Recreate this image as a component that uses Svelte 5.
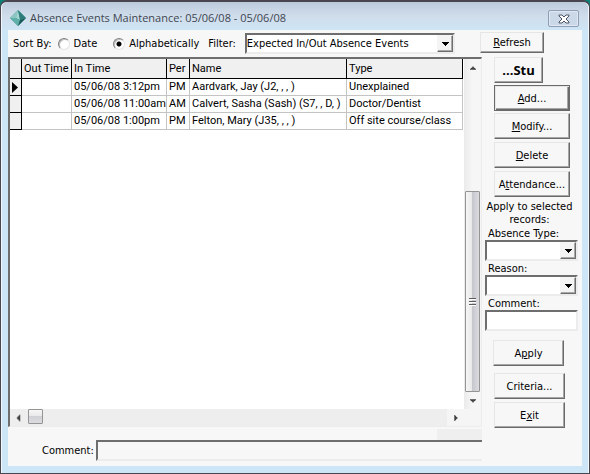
<script>
	let sort = $state('alpha');
	let filter = $state('Expected In/Out Absence Events');
	let absenceType = $state('');
	let reason = $state('');
	let comment = $state('');
	let note = $state('');
	let selected = $state(0);

	const events = [
		{ out: '', in: '05/06/08 3:12pm', per: 'PM', name: 'Aardvark, Jay (J2, , , )', type: 'Unexplained' },
		{ out: '', in: '05/06/08 11:00am', per: 'AM', name: 'Calvert, Sasha (Sash) (S7, , D, )', type: 'Doctor/Dentist' },
		{ out: '', in: '05/06/08 1:00pm', per: 'PM', name: 'Felton, Mary (J35, , , )', type: 'Off site course/class' }
	];
</script>

{#snippet arrow(dir)}
	<svg class="arrow {dir}" viewBox="0 0 7 4" width="7" height="4" aria-hidden="true">
		<path d="M0 0h7v1h-1v1h-1v1h-1v1h-1v-1h-1v-1h-1v-1h-1z" fill="currentColor" />
	</svg>
{/snippet}

<div class="window">
	<header>
		<svg class="logo" viewBox="0 0 16 16" width="16" height="16" aria-hidden="true">
			<path d="M8 0L16 8L8 16L0 8z" fill="#4d9c98" />
			<path d="M8 0L0 8L6 8z" fill="#8cc5c2" />
			<path d="M8 0L6 8L10 10z" fill="#a9d8d4" />
			<path d="M8 0L16 8L10 10z" fill="#2f7d7b" />
			<path d="M0 8L6 8L10 10L8 16z" fill="#5fb0aa" />
			<path d="M10 10L16 8L8 16z" fill="#1b5a5b" />
		</svg>
		<h1>Absence Events Maintenance: 05/06/08 - 05/06/08</h1>
		<button class="close" aria-label="Close">
			<svg viewBox="0 0 12 10" width="12" height="10" aria-hidden="true">
				<path
					d="M1 1h3l2 2l2-2h3v1l-3 3l3 3v1h-3l-2-2l-2 2h-3v-1l3-3l-3-3z"
					fill="#fff"
					stroke="#4c5464"
				/>
			</svg>
		</button>
	</header>

	<main>
		<section class="left">
			<div class="toolbar">
				<span class="caption">Sort By:</span>
				<label><input type="radio" name="sort" value="date" bind:group={sort} />Date</label>
				<label><input type="radio" name="sort" value="alpha" bind:group={sort} />Alphabetically</label>
				<label class="filter" for="filter">Filter:</label>
				<div class="combo wide">
					<select id="filter" bind:value={filter}>
						<option>Expected In/Out Absence Events</option>
						<option>All Absence Events</option>
					</select>
					<span class="drop">{@render arrow('down')}</span>
				</div>
			</div>

			<div class="grid">
				<div class="sheet">
					<table>
						<colgroup>
							<col class="c-mark" />
							<col class="c-out" />
							<col class="c-in" />
							<col class="c-per" />
							<col class="c-name" />
							<col />
						</colgroup>
						<thead>
							<tr>
								<th></th>
								<th>Out Time</th>
								<th>In Time</th>
								<th>Per</th>
								<th>Name</th>
								<th>Type</th>
							</tr>
						</thead>
						<tbody>
							{#each events as event, i}
								<tr onclick={() => (selected = i)}>
									<th>
										{#if i === selected}
											<svg viewBox="0 0 6 11" width="6" height="11" aria-hidden="true">
												<path d="M0 0L6 5.5L0 11z" />
											</svg>
										{/if}
									</th>
									<td>{event.out}</td>
									<td>{event.in}</td>
									<td>{event.per}</td>
									<td>{event.name}</td>
									<td>{event.type}</td>
								</tr>
							{/each}
						</tbody>
					</table>
				</div>
				<div class="vbar">
					<span class="end">{@render arrow('up')}</span>
					<span class="before"></span>
					<span class="thumb"><i></i><i></i><i></i></span>
					<span class="end">{@render arrow('down')}</span>
				</div>
				<div class="hbar">
					<span class="end">{@render arrow('left')}</span>
					<span class="thumb"></span>
					<span class="end last">{@render arrow('right')}</span>
				</div>
				<div class="corner"></div>
			</div>

			<div class="strip"></div>

			<div class="note">
				<label for="note">Comment:</label>
				<input id="note" type="text" bind:value={note} />
			</div>
		</section>

		<aside>
			<button class="btn refresh"><u>R</u>efresh</button>
			<button class="btn stu">...Stu</button>
			<button class="btn default"><u>A</u>dd...</button>
			<button class="btn"><u>M</u>odify...</button>
			<button class="btn"><u>D</u>elete</button>
			<button class="btn">A<u>t</u>tendance...</button>

			<div class="apply">
				<p>Apply to selected records:</p>
				<label for="type">Absence Type:</label>
				<div class="combo">
					<select id="type" bind:value={absenceType}><option value=""></option></select>
					<span class="drop">{@render arrow('down')}</span>
				</div>
				<label for="reason">Reason:</label>
				<div class="combo">
					<select id="reason" bind:value={reason}><option value=""></option></select>
					<span class="drop">{@render arrow('down')}</span>
				</div>
				<label for="comment">Comment:</label>
				<input id="comment" type="text" bind:value={comment} />
			</div>

			<button class="btn narrow first">A<u>p</u>ply</button>
			<button class="btn narrow">Criteria...</button>
			<button class="btn narrow">E<u>x</u>it</button>
		</aside>
	</main>
</div>

<style>
	:global(body) {
		background: #0b8378;
	}

	.window {
		box-sizing: border-box;
		display: flex;
		flex-direction: column;
		min-height: 100vh;
		padding: 0 6px 6px;
		border: 1px solid #4a4650;
		border-top-width: 2px;
		border-radius: 7px 7px 0 0;
		background: linear-gradient(#bccbdc, #d0ddeb 14px, #cde6f7 30px);
		box-shadow: inset 1px 0 #f2f8fc, inset -1px 0 #f2f8fc;
		color: #000;
		font: 11px/13px 'DejaVu Sans Condensed', 'DejaVu Sans', sans-serif;
	}

	button,
	input,
	select {
		box-sizing: border-box;
		margin: 0;
		color: inherit;
		font: inherit;
	}

	header {
		display: flex;
		align-items: center;
		height: 28px;
		padding: 0 4px 0 3px;
	}

	.logo {
		margin-top: 4px;
	}

	h1 {
		flex: 1;
		margin: 4px 0 0 4px;
		color: #3f4650;
		font: 11px/16px 'Open Sans', 'Noto Sans', sans-serif;
		white-space: nowrap;
	}

	.close {
		display: flex;
		align-items: center;
		justify-content: center;
		width: 31px;
		height: 17px;
		margin-top: 5px;
		padding: 0;
		border: 1px solid #8f9db5;
		border-radius: 2px;
		background: #cbd8e8;
		box-shadow: inset 0 0 0 1px #dfe8f3;
	}

	main {
		flex: 1;
		display: flex;
		margin: 0 1px 1px;
		background: #f7f7f7;
	}

	.left {
		flex: 1;
		min-width: 0;
		display: flex;
		flex-direction: column;
	}

	.toolbar {
		display: flex;
		align-items: center;
		height: 27px;
		padding-left: 5px;
	}

	.toolbar label {
		display: flex;
		align-items: center;
		gap: 4px;
		margin-right: 9px;
	}

	.toolbar .caption {
		margin-right: 6px;
	}

	.toolbar .caption + label {
		margin-right: 16px;
	}

	input[type='radio'] {
		appearance: none;
		width: 12px;
		height: 12px;
		border: 1px solid;
		border-color: #808080 #e4e4e4 #e4e4e4 #808080;
		border-radius: 50%;
		background: #fff;
		box-shadow: inset 1px 1px #5a5a5a66;
	}

	input[type='radio']:checked {
		background: radial-gradient(circle, #000 2px, #fff 3px);
	}

	.combo {
		position: relative;
		height: 21px;
	}

	.wide {
		flex: 1;
		margin-right: 27px;
	}

	select,
	input[type='text'] {
		display: block;
		width: 100%;
		height: 21px;
		padding: 0;
		border: 2px solid;
		border-color: #6e6e6e #ececec #ececec #6e6e6e;
		border-radius: 0;
		outline: none;
		background: #fff;
	}

	select {
		appearance: none;
		white-space: nowrap;
	}

	.drop {
		position: absolute;
		top: 2px;
		right: 2px;
		bottom: 2px;
		box-sizing: border-box;
		display: flex;
		align-items: center;
		justify-content: center;
		width: 16px;
		border: 1px solid;
		border-color: #f4f4f4 #6e6e6e #6e6e6e #f4f4f4;
		background: #f4f4f4;
		box-shadow: inset -1px -1px #a8a8a8;
		pointer-events: none;
	}

	.arrow {
		display: block;
	}

	.arrow.up {
		transform: rotate(180deg);
	}

	.arrow.left {
		transform: rotate(90deg);
	}

	.arrow.right {
		transform: rotate(-90deg);
	}

	.grid {
		flex: 1;
		display: grid;
		grid-template: 1fr 17px / 1fr 17px;
		border: 2px solid;
		border-color: #6e6e6e #ececec #ececec #6e6e6e;
		border-right-width: 1px;
		border-bottom-width: 1px;
		background: #fff;
	}

	.sheet {
		min-width: 0;
		padding-right: 1px;
		overflow: hidden;
	}

	table {
		width: 100%;
		border-spacing: 0;
		table-layout: fixed;
		font: 11px/16px Roboto, 'Liberation Sans', sans-serif;
		white-space: nowrap;
	}

	.c-mark {
		width: 12px;
	}

	.c-out {
		width: 50px;
	}

	.c-in {
		width: 95px;
	}

	.c-per {
		width: 23px;
	}

	.c-name {
		width: 157px;
	}

	th,
	td {
		height: 16px;
		padding: 0 0 0 2px;
		border: solid #c4c4c4;
		border-width: 0 1px 1px 0;
		font-weight: normal;
		text-align: left;
	}

	th {
		border-color: #000;
		background: #f0f0f0;
	}

	thead th {
		height: 19px;
	}

	tbody th {
		line-height: 0;
	}

	tbody th svg {
		vertical-align: middle;
	}

	.vbar,
	.hbar {
		display: flex;
		color: #404040;
	}

	.vbar {
		flex-direction: column;
		background: linear-gradient(90deg, #ebebeb, #f6f6f6 50%);
	}

	.hbar {
		background: #eee;
	}

	.end {
		display: flex;
		align-items: center;
		justify-content: center;
		width: 17px;
		height: 17px;
	}

	.end .arrow {
		width: 6px;
	}

	.last {
		margin-left: auto;
		background: #f5f5f5;
	}

	.thumb {
		box-sizing: border-box;
		border: 1px solid #949494;
		border-radius: 1px;
	}

	.vbar .before {
		flex: 115;
	}

	.vbar .thumb {
		flex: 178;
		display: flex;
		flex-direction: column;
		align-items: center;
		justify-content: center;
		gap: 1px;
		width: 15px;
		margin-left: 1px;
		padding-top: 22px;
		background: linear-gradient(90deg, #f6f6f6, #e9e9eb 45%, #c6c8ce 50%, #dcdce0);
	}

	.thumb i {
		width: 7px;
		height: 2px;
		background: linear-gradient(#5c5c5c 50%, #fff 50%);
	}

	.hbar .thumb {
		width: 15px;
		height: 15px;
		margin: 0 1px;
		background: linear-gradient(#f6f6f6, #e9e9eb 45%, #d0d1d6 50%, #dcdce0);
	}

	.corner {
		background: #f5f5f5;
	}

	.strip {
		align-self: flex-end;
		width: 45px;
		height: 11px;
		margin-top: 2px;
		background: #efefef;
	}

	.note {
		display: flex;
		align-items: center;
		gap: 2px;
		margin-bottom: 5px;
		padding-left: 34px;
	}

	.note input {
		flex: 1;
		min-width: 0;
		border-right: 0;
		background: #f7f7f7;
	}

	aside {
		display: flex;
		flex-direction: column;
		width: 100px;
		padding-top: 2px;
	}

	.btn {
		width: 76px;
		height: 26px;
		margin: 0 0 3px 12px;
		padding: 0;
		border: 1px solid;
		border-color: #e6e6e6 #6a6a6a #6a6a6a #e6e6e6;
		background: #f7f7f7;
		box-shadow: inset -1px -1px #a6a6a6;
		white-space: nowrap;
	}

	.refresh {
		width: 64px;
		height: 21px;
		margin: 0 0 4px -2px;
	}

	.stu {
		width: 49px;
		margin-bottom: 2px;
		font: bold 13px/16px 'Open Sans', 'Noto Sans', sans-serif;
	}

	.default {
		margin-bottom: 2px;
		border-color: #6a6a6a;
		box-shadow: inset 1px 1px #e6e6e6, inset -1px -1px #6a6a6a, inset -2px -2px #a6a6a6;
	}

	.apply {
		padding: 0 4px 0 3px;
	}

	.apply p {
		margin: 0 4px 0 0;
		text-align: center;
	}

	.apply label {
		display: block;
		height: 14px;
		padding-left: 3px;
		line-height: 16px;
	}

	.narrow {
		width: 71px;
	}

	.first {
		margin: 9px 0 7px 11px;
	}
</style>
